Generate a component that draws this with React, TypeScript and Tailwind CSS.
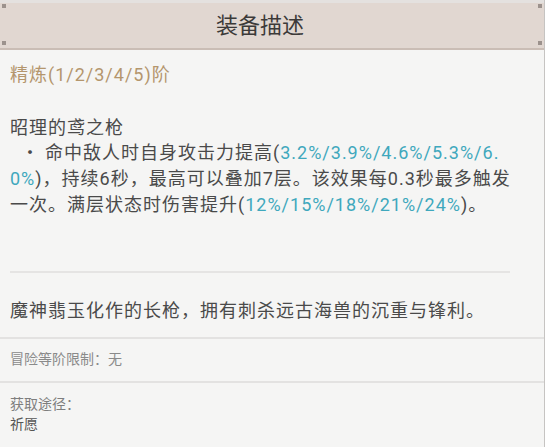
const Num = ({ children }: { children: React.ReactNode }) => (
  <span className="text-[#3fa8bd]">{children}</span>
);

const Corner = ({ pos }: { pos: string }) => (
  <span className={`absolute h-[4px] w-[4px] bg-[#9c928d] ${pos}`} />
);

const App = () => {
  return (
    <div className="h-[447px] w-[547px] overflow-hidden bg-white font-['Roboto','Noto_Sans_CJK_SC',sans-serif]">
      <div className="h-full w-[545px] border-r border-[#c6c4c2] bg-[#f5f5f4]">
        <div className="border-b-2 border-[#cabdb5] bg-[#e4e1df] pt-[3px]">
          <div className="relative flex h-[45px] items-center justify-center bg-[#e1d7d1] pr-[24px]">
            <Corner pos="left-[2px] top-[1px]" />
            <Corner pos="left-[2px] bottom-[3px]" />
            <Corner pos="right-[2px] top-[1px]" />
            <Corner pos="right-[2px] bottom-[3px]" />
            <h1 className="text-[22px] leading-none text-[#3c3a39]">装备描述</h1>
          </div>
        </div>

        <div className="px-[10px] pb-[13px] pt-[12px] text-[18px] tracking-[1px] text-[#4a4a4a]">
          <div className="leading-[26px] text-[#b4966d]">精炼(1/2/3/4/5)阶</div>
          <div className="mt-[28px] leading-[24px]">昭理的鸢之枪</div>
          <p className="w-[507px] break-all leading-[26px]">
            <span className="inline-block h-[26px] w-[35px] pl-[11px] align-top">・</span>
            命中敌人时自身攻击力提高(<Num>3.2%/3.9%/4.6%/5.3%/6.</Num><Num>0%</Num>)，持续6秒，最高可以叠加7层。该效果每0.3秒最多触发一次。满层状态时伤害提升(<Num>12%/15%/18%/21%/24%</Num>)。
          </p>
          <div className="mt-[53px] h-[2px] w-[500px] bg-[#e5e4e3]" />
          <p className="mt-[25px] leading-[26px]">魔神翡玉化作的长枪，拥有刺杀远古海兽的沉重与锋利。</p>
        </div>

        <div className="border-t-2 border-[#e3e2e1] px-[10px] pb-[12px] pt-[10px] text-[14px] leading-[20px] text-[#8a8a8a]">
          冒险等阶限制：无
        </div>

        <div className="border-t-2 border-[#e3e2e1] px-[10px] pt-[11px] text-[14px] leading-[20px]">
          <div className="text-[#7e7e7e]">获取途径：</div>
          <div className="text-[#555555]">祈愿</div>
        </div>
      </div>
    </div>
  );
};

export default App;
